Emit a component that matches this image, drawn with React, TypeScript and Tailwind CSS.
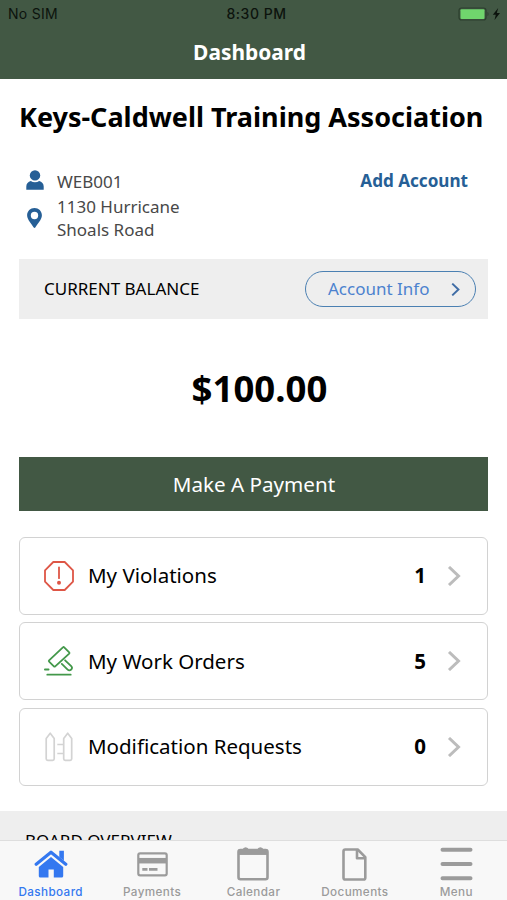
import React from 'react';

interface IconProps {
  className?: string;
}

const UserIcon: React.FC<IconProps> = ({ className }) => (
  <svg className={className} viewBox="0 0 18 20" fill="currentColor">
    <circle cx="9" cy="5.4" r="5.2" />
    <path d="M0.3 19.8v-3.2c0-3 1.900-5 4.500-5.600 1.200.8 2.600 1.200 4.200 1.200s3-.4 4.200-1.200c2.600.6 4.500 2.600 4.500 5.600v3.200z" />
  </svg>
);

const PinIcon: React.FC<IconProps> = ({ className }) => (
  <svg className={className} viewBox="0 0 15 20" fill="currentColor">
    <path
      fillRule="evenodd"
      d="M7.500 0C3.300 0 .1 3.200.1 7.200c0 4.600 4.700 8.800 6.600 12.300.4.600 1.200.6 1.600 0 1.900-3.500 6.600-7.700 6.600-12.300C14.900 3.200 11.700 0 7.500 0zm0 3.800a3.700 3.700 0 1 1 0 7.400 3.700 3.700 0 0 1 0-7.400z"
    />
  </svg>
);

const ViolationIcon: React.FC<IconProps> = ({ className }) => (
  <svg className={className} viewBox="0 0 30 30" fill="none" stroke="currentColor" strokeWidth="1.8" strokeLinejoin="round">
    <path d="M9.300 1h11.400L29 9.300v11.400L20.700 29H9.300L1 20.700V9.300z" />
    <path d="M15 6.500v10.700" strokeLinecap="round" />
    <circle cx="15" cy="21.800" r="2" fill="currentColor" stroke="none" />
  </svg>
);

const GavelIcon: React.FC<IconProps> = ({ className }) => (
  <svg className={className} viewBox="0 0 30 30" fill="none" stroke="currentColor" strokeWidth="1.8" strokeLinejoin="round" strokeLinecap="round">
    <path d="M18.900 1.300c.4-.4.9-.4 1.300 0l5 5c.4.400.4.900 0 1.300L11.200 20.300c-.4.400-.9.400-1.300 0l-4.800-4.600c-.4-.4-.4-.9 0-1.300z" />
    <path d="M17.800 17.900l5.600 5.500c1.100 1.100 2.700 1.100 3.800.1 1-1 1-2.300 0-3.300l-6.100-5.900" />
    <path d="M.9 23.500h3.700M3.300 28.700h23.400" />
  </svg>
);

const FenceIcon: React.FC<IconProps> = ({ className }) => (
  <svg className={className} viewBox="0 0 30 30" fill="none" stroke="currentColor" strokeWidth="1.700" strokeLinejoin="round">
    <path d="M6.200 1.200l4 5.300v20.300c0 .9-.6 1.500-1.500 1.500h-5c-.9 0-1.500-.6-1.500-1.500V6.500z" />
    <path d="M23.700 1.200l4 5.300v20.300c0 .9-.6 1.500-1.500 1.500h-5c-.9 0-1.500-.6-1.500-1.500V6.500z" />
    <path d="M13.300 12.500h6.200M13.300 21.500h6.200" />
  </svg>
);

const ChevronIcon: React.FC<IconProps> = ({ className }) => (
  <svg className={className} viewBox="0 0 12 20" fill="none" stroke="currentColor" strokeWidth="3">
    <path d="M1 1l9.500 9L1 19" />
  </svg>
);

const HomeIcon: React.FC<IconProps> = ({ className }) => (
  <svg className={className} viewBox="0 0 34 28" fill="currentColor">
    <path d="M17 7L29.200 17.100v8.900c0 .8-.6 1.500-1.500 1.500h-7.900v-8h-5.300v8H6.300c-.9 0-1.500-.7-1.500-1.500v-8.900z" />
    <path d="M25.300.7h4.600v10l-4.600-3.800z" />
    <path d="M2.200 14.300L17 2.200l14.800 12.100" fill="none" stroke="currentColor" strokeWidth="3.200" strokeLinecap="round" strokeLinejoin="round" />
  </svg>
);

const CardIcon: React.FC<IconProps> = ({ className }) => (
  <svg className={className} viewBox="0 0 31 25" fill="none" stroke="currentColor">
    <rect x="1.300" y="1.300" width="28.400" height="22" rx="1.800" strokeWidth="2.200" />
    <path d="M1 8.700h29" strokeWidth="5.500" />
    <path d="M5.300 17.400h5.200M12 17.400h8.500" strokeWidth="2.800" />
  </svg>
);

const CalendarIcon: React.FC<IconProps> = ({ className }) => (
  <svg className={className} viewBox="0 0 32 34" fill="none" stroke="currentColor">
    <rect x="1.500" y="3" width="29" height="29.200" rx="2" strokeWidth="2.600" />
    <path d="M1.500 5.200h29" strokeWidth="5.500" />
    <path d="M6.500 3c.5-2.300 3.800-2.300 4.300 0M21.200 3c.5-2.300 3.800-2.300 4.300 0" strokeWidth="2" fill="currentColor" />
  </svg>
);

const DocumentIcon: React.FC<IconProps> = ({ className }) => (
  <svg className={className} viewBox="0 0 25 33" fill="none" stroke="currentColor" strokeWidth="2.600" strokeLinejoin="round">
    <path d="M3.200 1.500h12.500l7.600 7.700v20.500c0 1.100-.7 1.800-1.700 1.800H3.200c-1.100 0-1.700-.7-1.700-1.800V3.200c0-1 .6-1.700 1.700-1.700z" />
    <path d="M15 2v8.300h8" />
  </svg>
);

const MenuIcon: React.FC<IconProps> = ({ className }) => (
  <svg className={className} viewBox="0 0 33 34" fill="none" stroke="currentColor" strokeWidth="4" strokeLinecap="round">
    <path d="M2.500 2.700h28M2.500 17h28M2.500 31.300h28" />
  </svg>
);

const CARDS = [
  { label: 'My Violations', count: 1, icon: ViolationIcon, color: 'text-[#de5646]' },
  { label: 'My Work Orders', count: 5, icon: GavelIcon, color: 'text-[#43984a]' },
  { label: 'Modification Requests', count: 0, icon: FenceIcon, color: 'text-[#d3d3d3]' },
];

const TABS = [
  { label: 'Dashboard', icon: HomeIcon, size: 'w-[34px] h-7', active: true },
  { label: 'Payments', icon: CardIcon, size: 'w-[31px] h-[25px]' },
  { label: 'Calendar', icon: CalendarIcon, size: 'w-8 h-[34px]' },
  { label: 'Documents', icon: DocumentIcon, size: 'w-[25px] h-[33px]' },
  { label: 'Menu', icon: MenuIcon, size: 'w-[33px] h-[34px]' },
];

const Header: React.FC = () => (
  <header className="h-[79px] shrink-0 bg-[#425844]">
    <div className="grid grid-cols-3 items-center h-7 pb-px pl-2 pr-1.5 font-['Inter',sans-serif] text-[14px] text-[#0c130d]">
      <span className="tracking-[0.3px]">No SIM</span>
      <span className="text-center font-medium tracking-[0.5px] pl-1">8:30 PM</span>
      <svg className="w-[43px] h-[14px] justify-self-end" viewBox="0 0 43 14">
        <rect x="1" y="1" width="27" height="12" rx="2.500" fill="none" stroke="#2c3f2e" strokeWidth="1.200" />
        <rect x="2.500" y="2.300" width="24" height="9.600" rx="1" fill="#70d66d" />
        <path d="M29.500 5v4c1.300-.4 1.300-3.600 0-4z" fill="#2c3f2e" />
        <path d="M40.200 1l-5.400 6.700h3L36.500 13 42 6h-3.200z" fill="#0c130d" />
      </svg>
    </div>
    <h1 className="mt-1.5 pr-2 text-center text-[20.900px] leading-9 font-bold text-white">Dashboard</h1>
  </header>
);

const TabBar: React.FC = () => (
  <nav className="grid grid-cols-5 h-[60px] shrink-0 border-t border-[#dedede] bg-[#f8f8f8] font-['Inter',sans-serif]">
    {TABS.map(({ label, icon: Icon, size, active }) => (
      <div key={label} className={active ? 'text-[#3478f0]' : 'text-[#9b9b9b]'}>
        <div className="flex items-center justify-center h-[46px]">
          <Icon className={size} />
        </div>
        <div className="text-center text-[11.700px] leading-[11px] font-medium tracking-[0.4px]">{label}</div>
      </div>
    ))}
  </nav>
);

const App: React.FC = () => {
  return (
    <div className="flex flex-col w-[507px] h-[900px] overflow-hidden bg-white font-['Noto_Sans',sans-serif] text-black">
      <Header />
      <main className="flex-1 min-h-0 overflow-hidden">
        <div className="px-[19px]">
          <h2 className="pt-[18px] text-[27px] leading-10 font-bold whitespace-nowrap">Keys-Caldwell Training Association</h2>

          <div className="flex justify-between mt-8 pl-[7px] pr-5 h-[90px]">
            <div className="text-[17px] leading-[23px] text-[#484848]">
              <div className="flex items-center gap-[13px] h-[26px] pb-1">
                <UserIcon className="w-[18px] h-5 text-[#265f96]" />
                <span className="pt-0.5">WEB001</span>
              </div>
              <div className="flex items-center gap-[15px] pl-px">
                <PinIcon className="w-[15px] h-5 text-[#265f96]" />
                <address className="not-italic">
                  1130 Hurricane
                  <br />
                  Shoals Road
                </address>
              </div>
            </div>
            <a className="h-6 text-[17.100px] leading-6 font-bold text-[#265f96]">Add Account</a>
          </div>

          <section className="flex items-center justify-between h-[60px] pl-[25px] pr-3 bg-[#eeeeee]">
            <span className="text-[17px]">CURRENT BALANCE</span>
            <button className="flex items-center justify-between w-[171px] h-9 pl-[22px] pr-[15px] rounded-full border-[1.500px] border-[#4b80b2] text-[17px] text-[#4c82ce]">
              Account Info
              <ChevronIcon className="w-[9px] h-[13px] text-[#3f6ca5]" />
            </button>
          </section>

          <p className="mt-11 pl-3 text-center text-[36.600px] leading-[50px] font-bold">$100.00</p>

          <button className="block w-full h-[54px] mt-11 pl-px bg-[#425844] text-[20.600px] text-white">Make A Payment</button>

          <div className="flex flex-col gap-[7.500px] mt-[25.500px]">
            {CARDS.map(({ label, count, icon: Icon, color }) => (
              <div key={label} className="flex items-center h-[78px] pl-6 pr-[26px] rounded-md border-[1.500px] border-[#d2d2d2]">
                <Icon className={`w-[30px] h-[30px] ${color}`} />
                <span className="flex-1 ml-[14px] text-[20.500px]">{label}</span>
                <span className="text-[20.500px] font-bold">{count}</span>
                <ChevronIcon className="w-3.5 h-5 ml-[21px] text-[#bcbcbc]" />
              </div>
            ))}
          </div>
        </div>

        <div className="h-[60px] mt-[25px] pl-[25px] pt-[18px] bg-[#eeeeee] text-[17px] leading-6">BOARD OVERVIEW</div>
      </main>
      <TabBar />
    </div>
  );
};

export default App;
